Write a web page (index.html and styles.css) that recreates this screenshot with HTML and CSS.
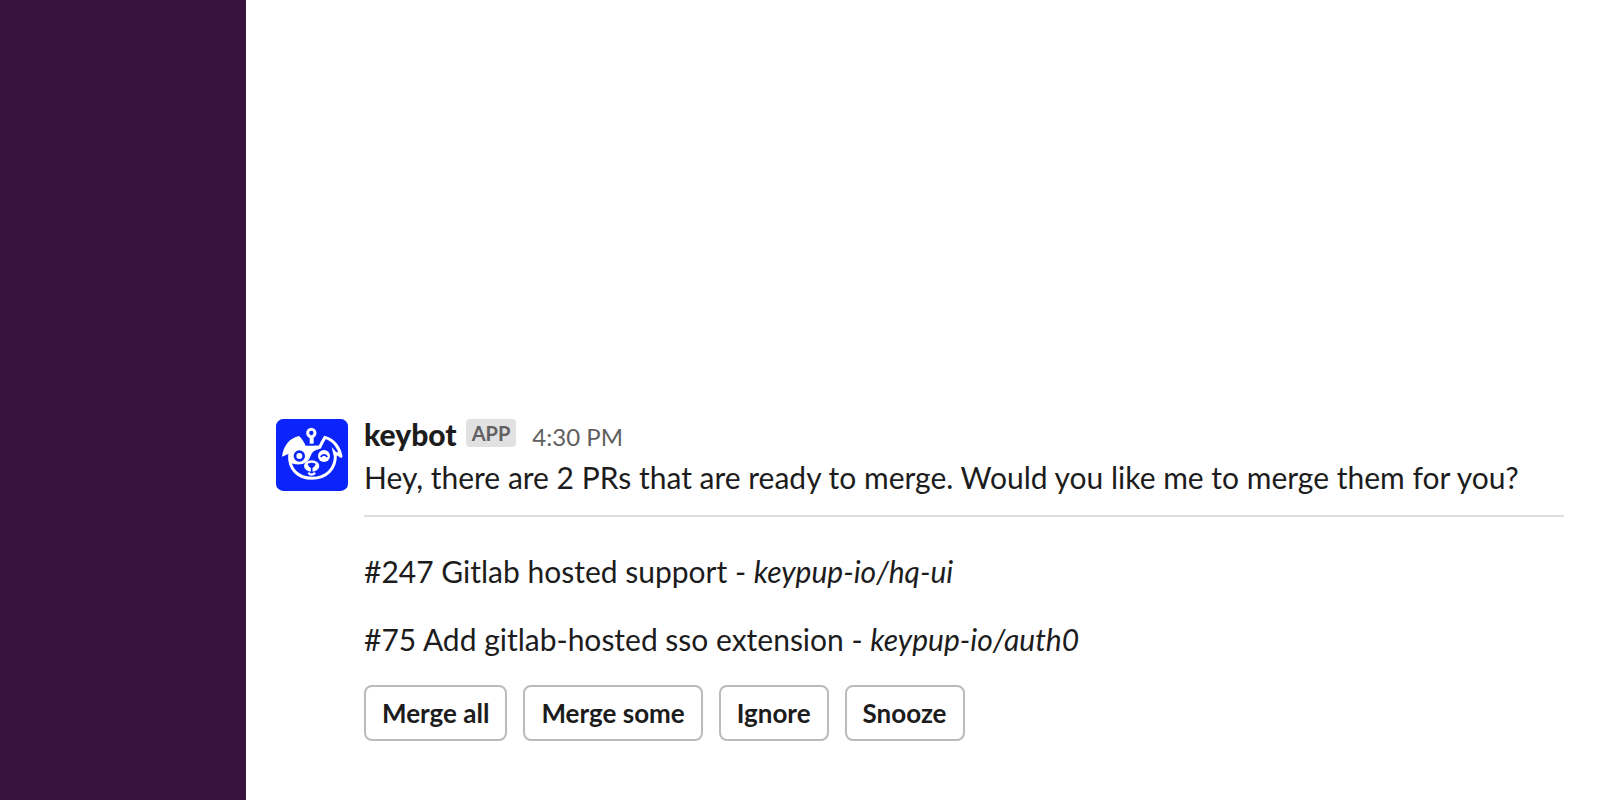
FILE: index.html
```html
<!DOCTYPE html>
<html lang="en">
<head>
  <meta charset="UTF-8" />
  <meta name="viewport" content="width=device-width, initial-scale=1.0"/>
  <title>keybot</title>
  <link rel="stylesheet" href="styles.css">
</head>
<body>
  <aside class="sidebar"></aside>

  <main class="channel">
    <article class="message">
      <svg class="avatar" viewBox="0 0 216 216" role="img" aria-label="keybot">
        <rect width="216" height="216" rx="22" fill="#0b24fb"/>
        <!-- antenna -->
        <circle cx="106" cy="42" r="11" fill="none" stroke="#fff" stroke-width="9"/>
        <path d="M101 54h12v20h-12z" fill="#fff"/>
        <!-- left ear and eye patch -->
        <path d="M18 113 C22 80 42 56 69 51 C78 58 84 70 89 80 L134 80 L130 90 C116 93 108 99 104 110 C98 128 84 138 58 136 L43 132 L37 105 Z" fill="#fff"/>
        <!-- right ear -->
        <path d="M116 85 H131 C137 72 141 64 147 55 C172 62 190 84 195 112 L180 102" fill="none" stroke="#fff" stroke-width="9" stroke-linejoin="round"/>
        <path d="M167 84 L188 108 L173 110 Z" fill="#fff"/>
        <!-- face -->
        <path d="M41 108 C38 150 66 178 108 178 C150 178 181 150 178 104" fill="none" stroke="#fff" stroke-width="9"/>
        <!-- eyes -->
        <circle cx="70" cy="111" r="13" fill="none" stroke="#0b24fb" stroke-width="8"/>
        <circle cx="144" cy="111" r="18" fill="#fff"/>
        <path d="M134 114 Q144 101 154 114" fill="none" stroke="#0b24fb" stroke-width="5"/>
        <!-- muzzle -->
        <ellipse cx="107" cy="141" rx="23" ry="17" fill="#fff"/>
        <path d="M95 136 Q95 131 107 131 Q119 131 119 136 Q117 144 107 148 Q97 144 95 136Z" fill="#0b24fb"/>
        <path d="M107 146v13" fill="none" stroke="#0b24fb" stroke-width="5"/>
        <path d="M97 161 Q107 173 117 161" fill="none" stroke="#fff" stroke-width="7"/>
      </svg>

      <div class="content">
        <header class="meta">
          <span class="name">keybot</span>
          <span class="badge">APP</span>
          <time class="time">4:30 PM</time>
        </header>
        <p class="text">Hey, there are 2 PRs that are ready to merge. Would you like me to merge them for you?</p>
        <hr class="divider">
        <p class="pr">#247 Gitlab hosted support - <em>keypup-io/hq-ui</em></p>
        <p class="pr">#75 Add gitlab-hosted sso extension - <em>keypup-io/auth0</em></p>
        <div class="actions">
          <button class="btn" type="button">Merge all</button>
          <button class="btn" type="button">Merge some</button>
          <button class="btn" type="button">Ignore</button>
          <button class="btn" type="button">Snooze</button>
        </div>
      </div>
    </article>
  </main>
</body>
</html>
```
FILE: styles.css
```css
body {
  margin: 0;
  min-height: 100vh;
  display: flex;
  background-color: #fff;
  color: #1d1c1d;
  font-family: Lato, "Liberation Sans", sans-serif;
  font-size: 30px;
  line-height: 44px;
}

.sidebar {
  flex: 0 0 246px;
  background-color: #38133d;
}

.channel {
  flex: 1;
  display: flex;
  flex-direction: column;
  justify-content: flex-end;
  padding: 0 36px 59px 30px;
}

.message {
  display: flex;
  align-items: flex-start;
  gap: 16px;
}

.avatar {
  flex: none;
  width: 72px;
  height: 72px;
}

.content {
  flex: 1;
}

.meta {
  display: flex;
  align-items: baseline;
  height: 28px;
  line-height: 30px;
}

.name {
  font-weight: 900;
}

.badge {
  align-self: flex-start;
  margin: 0 16px 0 9px;
  padding: 0 6px;
  border-radius: 4px;
  background-color: #e1e1e1;
  color: #616061;
  font-size: 20px;
  font-weight: 700;
  line-height: 28px;
}

.time {
  color: #616061;
  font-size: 24px;
}

.text {
  margin: 8px 0 0;
}

.divider {
  margin: 16px 0 0;
  border: none;
  border-top: 2px solid #dddddd;
}

.pr {
  margin: 24px 0 0;
}

.divider + .pr {
  margin-top: 32px;
}

.actions {
  display: flex;
  flex-wrap: wrap;
  gap: 16px;
  margin-top: 24px;
}

.btn {
  padding: 0 16px;
  border: 2px solid #bbbbbb;
  border-radius: 8px;
  background-color: #fff;
  color: #1d1c1d;
  font-family: inherit;
  font-size: 26px;
  font-weight: 700;
  line-height: 52px;
  cursor: pointer;
}
```
